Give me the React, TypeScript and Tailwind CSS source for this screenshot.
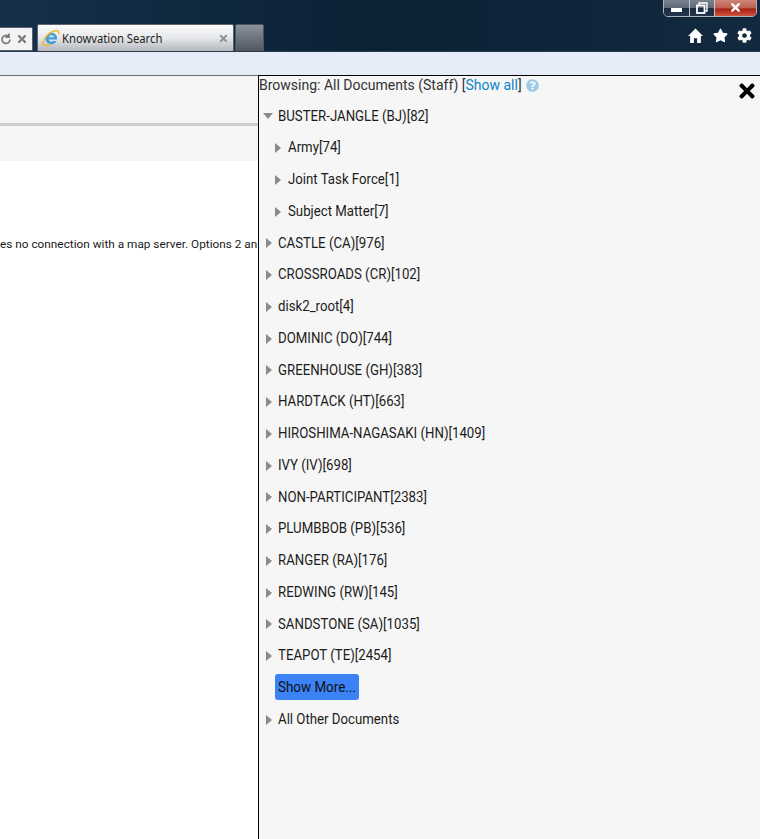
import { FaCog, FaQuestionCircle, FaStar, FaTimes } from "react-icons/fa";

type Row = { label: string; indent?: boolean; open?: boolean };

const rows: Row[] = [
  { label: "BUSTER-JANGLE (BJ)[82]", open: true },
  { label: "Army[74]", indent: true },
  { label: "Joint Task Force[1]", indent: true },
  { label: "Subject Matter[7]", indent: true },
  { label: "CASTLE (CA)[976]" },
  { label: "CROSSROADS (CR)[102]" },
  { label: "disk2_root[4]" },
  { label: "DOMINIC (DO)[744]" },
  { label: "GREENHOUSE (GH)[383]" },
  { label: "HARDTACK (HT)[663]" },
  { label: "HIROSHIMA-NAGASAKI (HN)[1409]" },
  { label: "IVY (IV)[698]" },
  { label: "NON-PARTICIPANT[2383]" },
  { label: "PLUMBBOB (PB)[536]" },
  { label: "RANGER (RA)[176]" },
  { label: "REDWING (RW)[145]" },
  { label: "SANDSTONE (SA)[1035]" },
  { label: "TEAPOT (TE)[2454]" },
];

const Arrow = ({ open }: { open?: boolean }) =>
  open ? (
    <svg width="10" height="6" viewBox="0 0 10 6" className="shrink-0">
      <path d="M0 0h10L5 6z" fill="#8a8a8a" />
    </svg>
  ) : (
    <svg width="6" height="10" viewBox="0 0 6 10" className="shrink-0">
      <path d="M0 0l6 5-6 5z" fill="#8a8a8a" />
    </svg>
  );

const TreeRow = ({ label, indent, open }: Row) => (
  <div className={`flex h-[31.75px] items-center ${indent ? "pl-[16px]" : open ? "pl-[4px]" : "pl-[7px]"}`}>
    <Arrow open={open} />
    <span
      className={`origin-left scale-x-[0.912] whitespace-nowrap text-[14.5px] text-[#1c1c1c] ${
        indent ? "ml-[7px]" : open ? "ml-[5px]" : "ml-[6px]"
      }`}
    >
      {label}
    </span>
  </div>
);

const IeLogo = () => (
  <svg width="18" height="18" viewBox="0 0 18 18" className="shrink-0">
    <path d="M9.5 3.8a5.7 5.7 0 1 0 4.9 8.3h-3a3 3 0 0 1-4.800-1.700h8.400c.6-3.800-2-6.600-5.500-6.600zM6.800 8.200a2.800 2.800 0 0 1 5.400 0z" fill="#3f9fdc" />
    <path d="M1.500 15.500C0 12 5 4 13 1.800c2.600-.7 4.300.5 3.600 3.600" fill="none" stroke="#efb92e" strokeWidth="1.5" />
    <path d="M1.500 15.500c1.200 1.600 4 1 6.500-.5" fill="none" stroke="#efb92e" strokeWidth="1.5" />
  </svg>
);

export default function App() {
  return (
    <div className="relative h-[839px] w-[760px] overflow-hidden bg-white font-['Roboto',sans-serif]">
      {/* ── Browser chrome ── */}
      <div className="relative h-[52px] border-b border-b-[#2c3a4a] bg-gradient-to-r from-[#15304a] via-[#0b2134] to-[#12293f]">
        <div className="flex items-end pt-[24px]">
          <div className="flex h-[24px] w-[33px] items-center justify-end gap-[4px] rounded-r-[2px] border border-l-0 border-[#55606c] bg-[#f3f3f3] pr-[4px] text-[#7d7d7d]">
            <svg width="12" height="12" viewBox="0 0 11 12">
              <path d="M9.5 6.5a4 4 0 1 1-1.5-3.2M8.5 0.5v3.500h-3.500" fill="none" stroke="#7d7d7d" strokeWidth="1.8" />
            </svg>
            <FaTimes size={12} />
          </div>
          <div className="ml-[4px] flex h-[27px] w-[197px] items-center rounded-t-[2px] border border-b-0 border-[#5a6570] bg-gradient-to-b from-[#fbfbfb] via-[#e6e7e9] to-[#b3b7bd] pl-[4px] pr-[4px]">
            <IeLogo />
            <span className="ml-[2px] flex-1 origin-left translate-y-[1px] scale-x-[0.935] whitespace-nowrap font-['Noto_Sans',sans-serif] text-[12px] text-[#222]">Knowvation Search</span>
            <FaTimes size={11} className="text-[#8b9096]" />
          </div>
          <div className="ml-[1px] h-[27px] w-[29px] rounded-t-[2px] border border-b-0 border-[#4a5561] bg-gradient-to-b from-[#8c929a] to-[#4f5761]" />
        </div>

        {/* Window buttons */}
        <div className="absolute right-[3px] top-[-2px] flex h-[19px] w-[94px] overflow-hidden rounded-b-[5px] border border-[#aab2bb]">
          <div className="flex w-[26px] items-end justify-center border-r border-[#c2c8cf] bg-[linear-gradient(#7c8792_0%,#5f6b78_50%,#1a2c40_55%,#22364c_100%)] pb-[4px]">
            <div className="h-[4px] w-[11px] bg-white" />
          </div>
          <div className="flex w-[25px] items-center justify-center border-r border-[#c2c8cf] bg-[linear-gradient(#7c8792_0%,#5f6b78_50%,#1a2c40_55%,#22364c_100%)]">
            <svg width="12" height="12" viewBox="0 0 12 12">
              <path d="M3 3V1h8v8H9" fill="none" stroke="#fff" strokeWidth="1.4" />
              <rect x="1" y="3.5" width="7.5" height="7.5" fill="none" stroke="#fff" strokeWidth="1.8" />
            </svg>
          </div>
          <div className="flex flex-1 items-center justify-center bg-[linear-gradient(#d08a7c_0%,#bd6252_50%,#a8200f_60%,#d0553f_100%)]">
            <FaTimes size={13} className="text-white" />
          </div>
        </div>

        {/* Toolbar icons */}
        <div className="absolute right-[8px] top-[28px] flex items-center gap-[9.5px] text-white">
          <svg width="15" height="15" viewBox="0 0 14 14" fill="currentColor">
            <path d="M7 0.5L14 7.5H12V14H8.5V9.5H5.5V14H2V7.5H0z" />
          </svg>
          <FaStar size={15} />
          <FaCog size={15} />
        </div>
      </div>

      {/* ── Favourites band ── */}
      <div className="h-[24px] border-b border-b-[#6f6f6f] bg-[#e6edf9]" />

      {/* ── Page behind the panel ── */}
      <div className="h-[50px] border-b-[3px] border-b-[#cfcfcf] bg-[#f5f5f5]" />
      <div className="h-[35px] bg-[#f5f5f5]" />
      <div className="bg-white pt-[75px]">
        <p className="whitespace-nowrap text-[11.8px] leading-[16px] text-[#1a1a1a]">
          es no connection with a map server. Options 2 an
        </p>
      </div>

      {/* ── Browse panel, sits over the page ── */}
      <div className="absolute bottom-[-2px] left-[258px] top-[75px] w-[503px] border border-black bg-[#f6f6f6]">
        <div className="flex h-[18px] items-center whitespace-nowrap text-[14px] text-[#333]">
          <span>Browsing: All Documents (Staff) [</span>
          <span className="text-[#0d84c9]">Show all</span>
          <span>]</span>
          <FaQuestionCircle size={13} className="ml-[4px] text-[#9ccbea]" />
        </div>
        <FaTimes size={22} className="absolute right-[2px] top-[4px] text-black" />

        <div className="mt-[6.6px]">
          {rows.map((row) => (
            <TreeRow key={row.label} {...row} />
          ))}
          <div className="flex h-[31.75px] items-center pl-[16px]">
            <button className="-mt-[2px] h-[26px] w-[84px] rounded-[3px] bg-[#3b82f6] pl-[3px] text-left">
              <span className="inline-block origin-left scale-x-[0.925] whitespace-nowrap text-[14.5px] text-[#111]">Show More...</span>
            </button>
          </div>
          <TreeRow label="All Other Documents" />
        </div>
      </div>
    </div>
  );
}
